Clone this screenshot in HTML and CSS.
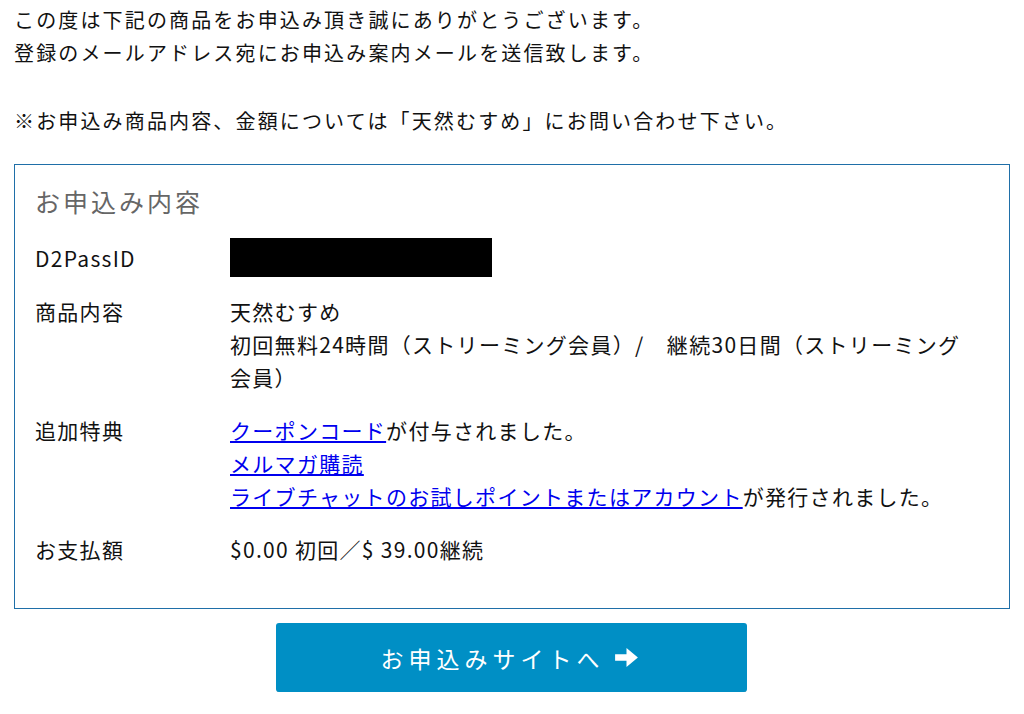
FILE: index.html
```html
<!DOCTYPE html>
<html lang="ja">
<head>
<meta charset="utf-8">
<link rel="stylesheet" href="styles.css">
</head>
<body>
<div class="page">
  <div class="intro">
    <p>この度は下記の商品をお申込み頂き誠にありがとうございます。<br>登録のメールアドレス宛にお申込み案内メールを送信致します。</p>
    <p class="note">※お申込み商品内容、金額については「天然むすめ」にお問い合わせ下さい。</p>
  </div>
  <div class="box">
    <h2 class="box-title">お申込み内容</h2>
    <div class="rows">
      <div class="label id-label">D2PassID</div>
      <div class="value"><div class="redact"></div></div>
      <div class="label">商品内容</div>
      <div class="value">天然むすめ<br>初回無料24時間（ストリーミング会員）/　継続30日間（ストリーミング会員）</div>
      <div class="label">追加特典</div>
      <div class="value"><a href="#">クーポンコード</a>が付与されました。<br><a href="#">メルマガ購読</a><br><a href="#">ライブチャットのお試しポイントまたはアカウント</a>が発行されました。</div>
      <div class="label">お支払額</div>
      <div class="value">$0.00 初回／$ 39.00継続</div>
    </div>
  </div>
  <div class="btn-wrap">
    <a class="btn" href="#">お申込みサイトへ<svg class="arrow" viewBox="0 0 24 20" width="24" height="20"><path d="M0 6.5H12V0L24 10L12 20V13.5H0Z" fill="#fff"/></svg></a>
  </div>
</div>
</body>
</html>
```
FILE: styles.css
```css
html, body { margin: 0; padding: 0; background: #fff; }
body {
  font-family: "Noto Sans CJK JP", "Noto Sans", sans-serif;
  color: #111;
}
.page { padding: 3px 14px 0 14px; }
.intro p {
  margin: 0;
  font-size: 20px;
  letter-spacing: 2.15px;
  line-height: 33px;
}
.intro .note { margin-top: 35px; }
.box {
  margin-top: 27px;
  border: 1.5px solid #1f6fa8;
  padding: 18px 32px 42px 20px;
}
.box-title {
  margin: 0;
  font-size: 25px;
  font-weight: normal;
  color: #666;
  line-height: 36px;
  letter-spacing: 3px;
}
.rows {
  margin-top: 19px;
  display: grid;
  grid-template-columns: 195px 1fr;
  row-gap: 20px;
  font-size: 21px;
  line-height: 33px;
  letter-spacing: 1.3px;
}
.label, .value { color: #111; }
.id-label { align-self: center; padding-top: 4px; }
.redact {
  width: 262px;
  height: 39px;
  background: #000;
  margin-bottom: -3px;
}
.value a { color: #0000ee; text-decoration: underline; }
.btn-wrap {
  display: flex;
  justify-content: center;
  margin-top: 14px;
  padding-right: 2px;
}
.btn {
  display: flex;
  align-items: center;
  justify-content: center;
  width: 471px;
  height: 69px;
  background: #008fc5;
  border-radius: 3px;
  color: #fff;
  text-decoration: none;
  font-size: 23px;
  letter-spacing: 5px;
  box-shadow: 0 4px 0 -1px #bdbdbd;
  padding-right: 4px;
  box-sizing: border-box;
}
.arrow { margin-left: 10px; width: 23px; height: 19px; }
```
